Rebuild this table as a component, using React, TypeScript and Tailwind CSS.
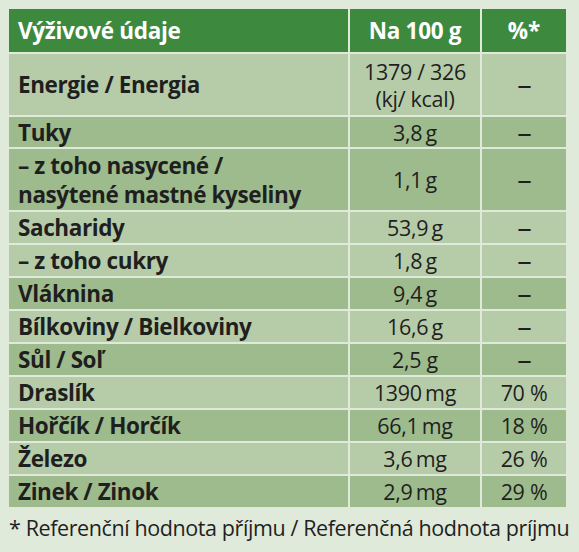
import React from 'react'

type Row = { label: string[]; value: string[]; pct: string; dark: boolean; h: string }

const rows: Row[] = [
  { label: ['Energie / Energia'], value: ['1379 / 326', '(kj/ kcal)'], pct: '–', dark: false, h: 'h-[61px]' },
  { label: ['Tuky'], value: ['3,8\u2009g'], pct: '–', dark: true, h: 'h-[30px]' },
  { label: ['– z toho nasycené /', 'nasýtené mastné kyseliny'], value: ['1,1\u2009g'], pct: '–', dark: true, h: 'h-[61px]' },
  { label: ['Sacharidy'], value: ['53,9\u2009g'], pct: '–', dark: false, h: 'h-[31px]' },
  { label: ['– z toho cukry'], value: ['1,8\u2009g'], pct: '–', dark: false, h: 'h-[31px]' },
  { label: ['Vláknina'], value: ['9,4\u2009g'], pct: '–', dark: true, h: 'h-[31px]' },
  { label: ['Bílkoviny / Bielkoviny'], value: ['16,6\u2009g'], pct: '–', dark: false, h: 'h-[31px]' },
  { label: ['Sůl / Soľ'], value: ['2,5 g'], pct: '–', dark: true, h: 'h-[31px]' },
  { label: ['Draslík'], value: ['1390\u2009mg'], pct: '70 %', dark: false, h: 'h-[31px]' },
  { label: ['Hořčík / Horčík'], value: ['66,1\u2009mg'], pct: '18 %', dark: true, h: 'h-[31px]' },
  { label: ['Železo'], value: ['3,6\u2009mg'], pct: '26 %', dark: false, h: 'h-[31px]' },
  { label: ['Zinek / Zinok'], value: ['2,9\u2009mg'], pct: '29 %', dark: true, h: 'h-[31px]' },
]

const App = () => {
  return (
    <div className="w-[579px] h-[552px] bg-[#e0eadb] pt-[9px] pl-[9px] font-['Open_Sans',sans-serif] text-[#1f1f1f] overflow-hidden">
      <div className="w-[557px] grid grid-cols-[339px_130px_84px] gap-[2px]">
        {/* header */}
        <div className="h-[43px] bg-[#3d8a3e] text-white font-bold text-[22.5px] flex items-center pl-[9px] tracking-[-0.3px]">Výživové údaje</div>
        <div className="h-[43px] bg-[#3d8a3e] text-white font-bold text-[22.5px] flex items-center justify-center tracking-[-0.3px]">Na 100 g</div>
        <div className="h-[43px] bg-[#3d8a3e] text-white font-bold text-[22.5px] flex items-center justify-center">%*</div>

        {rows.map((r, i) => {
          const bg = r.dark ? 'bg-[#9dbb8c]' : 'bg-[#b6cca9]'
          return (
            <React.Fragment key={i}>
              <div className={`${r.h} ${bg} flex flex-col justify-center pl-[9px] font-bold text-[22.5px] leading-[29px] tracking-[-0.4px]`}>
                {r.label.map((l, j) => <span key={j}>{l}</span>)}
              </div>
              <div className={`${r.h} ${bg} flex flex-col justify-center items-center text-[21.5px] leading-[27px] tracking-[-0.3px]`}>
                {r.value.map((v, j) => <span key={j}>{v}</span>)}
              </div>
              <div className={`${r.h} ${bg} flex items-center justify-center text-[21.5px] leading-[27px] tracking-[-0.3px]`}>
                {r.pct === '–' ? <span className="inline-block font-semibold scale-x-[1.35]">–</span> : r.pct}
              </div>
            </React.Fragment>
          )
        })}
      </div>
      <div className="mt-[7px] text-[21.5px] leading-[28px] tracking-[-0.4px] whitespace-nowrap">* Referenční hodnota příjmu / Referenčná hodnota príjmu</div>
    </div>
  )
}

export default App
